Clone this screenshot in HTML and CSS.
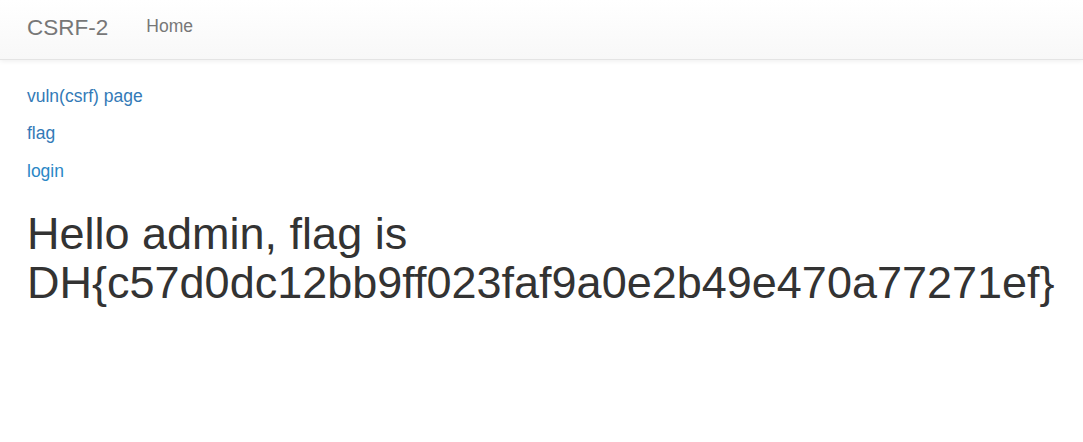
FILE: index.html
```html
<!DOCTYPE html>
<html lang="en">
<head>
<meta charset="utf-8">
<title>CSRF-2</title>
<link rel="stylesheet" href="styles.css">
</head>
<body>
<nav class="navbar">
  <a class="brand" href="#">CSRF-2</a>
  <a class="nav-link" href="#">Home</a>
</nav>
<main class="content">
  <p><a class="link" href="#">vuln(csrf) page</a></p>
  <p><a class="link" href="#">flag</a></p>
  <p><a class="link link-alt" href="#">login</a></p>
  <h1 class="title">Hello admin, flag is DH{c57d0dc12bb9ff023faf9a0e2b49e470a77271ef}</h1>
</main>
</body>
</html>
```

FILE: styles.css
```css
html, body {
  margin: 0;
  padding: 0;
  background: #fff;
}
body {
  font-family: "Liberation Sans", Arial, Helvetica, sans-serif;
  font-size: 17.5px;
  line-height: 25px;
  color: #333;
}
.navbar {
  display: flex;
  align-items: flex-start;
  height: 59px;
  border-bottom: 1px solid #e4e4e4;
  background: linear-gradient(to bottom, #ffffff 0%, #f8f8f8 100%);
  box-shadow: 0 1px 5px rgba(0, 0, 0, 0.075);
  padding-left: 27px;
}
.brand {
  font-size: 22.5px;
  line-height: 25px;
  padding-top: 14.5px;
  color: #777;
  text-decoration: none;
  margin-right: 38px;
}
.nav-link {
  font-size: 17.5px;
  line-height: 25px;
  padding-top: 13.5px;
  color: #777;
  text-decoration: none;
}
.content {
  padding: 23.5px 27px 0;
}
.content p {
  margin: 0 0 12.5px;
}
.link {
  color: #337ab7;
  text-decoration: none;
}
.link-alt {
  color: #2a87c6;
}
.title {
  margin: 25px 0 12.5px;
  font-size: 45px;
  line-height: 49.5px;
  font-weight: 500;
  color: #333;
}
```
